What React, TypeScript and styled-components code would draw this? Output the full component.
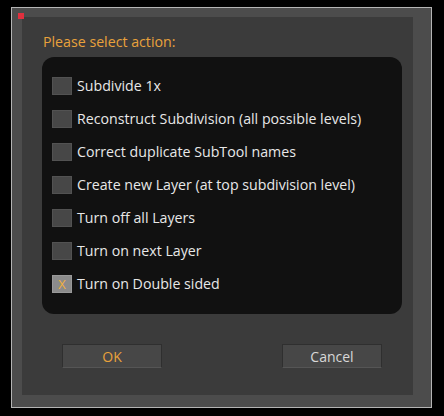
import React from "react";
import styled, { createGlobalStyle } from "styled-components";

const Global = createGlobalStyle`
  html, body { margin: 0; padding: 0; background: #000; }
  body { width: 444px; height: 416px; overflow: hidden; font-family: "Open Sans", "DejaVu Sans", sans-serif; }
`;

const Page = styled.div`
  width: 444px;
  height: 416px;
  padding: 7px 0 0 11px;
  box-sizing: border-box;
`;

const Window = styled.div`
  position: relative;
  width: 421px;
  height: 401px;
  box-sizing: border-box;
  border: 1px solid #b4b4b4;
  background: #4c4c4c;
  padding: 9px 18px 12px 10px;
  display: flex;
`;

const Inner = styled.div`
  flex: 1;
  background: #3b3b3b;
  display: flex;
  flex-direction: column;
  padding: 15px 11px 0 21px;
  box-sizing: border-box;
`;

const RedDot = styled.div`
  position: absolute;
  left: 6px;
  top: 5px;
  width: 6px;
  height: 6px;
  background: #e0303e;
`;

const Title = styled.div`
  color: #e9a23b;
  font-size: 14.2px;
  line-height: 20px;
  height: 20px;
  margin-bottom: 5px;
`;

const Panel = styled.div`
  width: 360px;
  height: 257px;
  margin-left: -1px;
  background: #111111;
  border-radius: 12px;
  padding: 12px 0 0 10px;
  box-sizing: border-box;
  display: flex;
  flex-direction: column;
`;

const Row = styled.div`
  height: 33px;
  display: flex;
  align-items: center;
  gap: 5px;
`;

const Box = styled.div<{ $checked?: boolean }>`
  width: 20px;
  height: 18px;
  box-sizing: border-box;
  background: ${(p) => (p.$checked ? "#8b8b8b" : "#474747")};
  border: 1px solid ${(p) => (p.$checked ? "#999" : "#525252")};
  color: #f0b040;
  font-size: 13px;
  line-height: 16px;
  text-align: center;
`;

const Label = styled.span`
  color: #e8e8e8;
  font-size: 14.2px;
  line-height: 18px;
`;

const Buttons = styled.div`
  display: flex;
  justify-content: space-between;
  padding: 30px 0 0 19px;
  width: 320px;
`;

const Button = styled.div<{ $primary?: boolean }>`
  width: 100px;
  height: 24px;
  box-sizing: border-box;
  background: #474747;
  border: 1px solid #2f2f2f;
  border-bottom-color: #555;
  display: flex;
  align-items: center;
  justify-content: center;
  color: ${(p) => (p.$primary ? "#e9a23b" : "#d8d8d8")};
  font-size: 14px;
`;

const items = [
  "Subdivide 1x",
  "Reconstruct Subdivision (all possible levels)",
  "Correct duplicate SubTool names",
  "Create new Layer (at top subdivision level)",
  "Turn off all Layers",
  "Turn on next Layer",
  "Turn on Double sided",
];

export default function App() {
  return (
    <Page>
      <Global />
      <Window>
        <RedDot />
        <Inner>
          <Title>Please select action:</Title>
          <Panel>
            {items.map((t, i) => (
              <Row key={t}>
                <Box $checked={i === 6}>{i === 6 ? "X" : ""}</Box>
                <Label>{t}</Label>
              </Row>
            ))}
          </Panel>
          <Buttons>
            <Button $primary>OK</Button>
            <Button>Cancel</Button>
          </Buttons>
        </Inner>
      </Window>
    </Page>
  );
}
